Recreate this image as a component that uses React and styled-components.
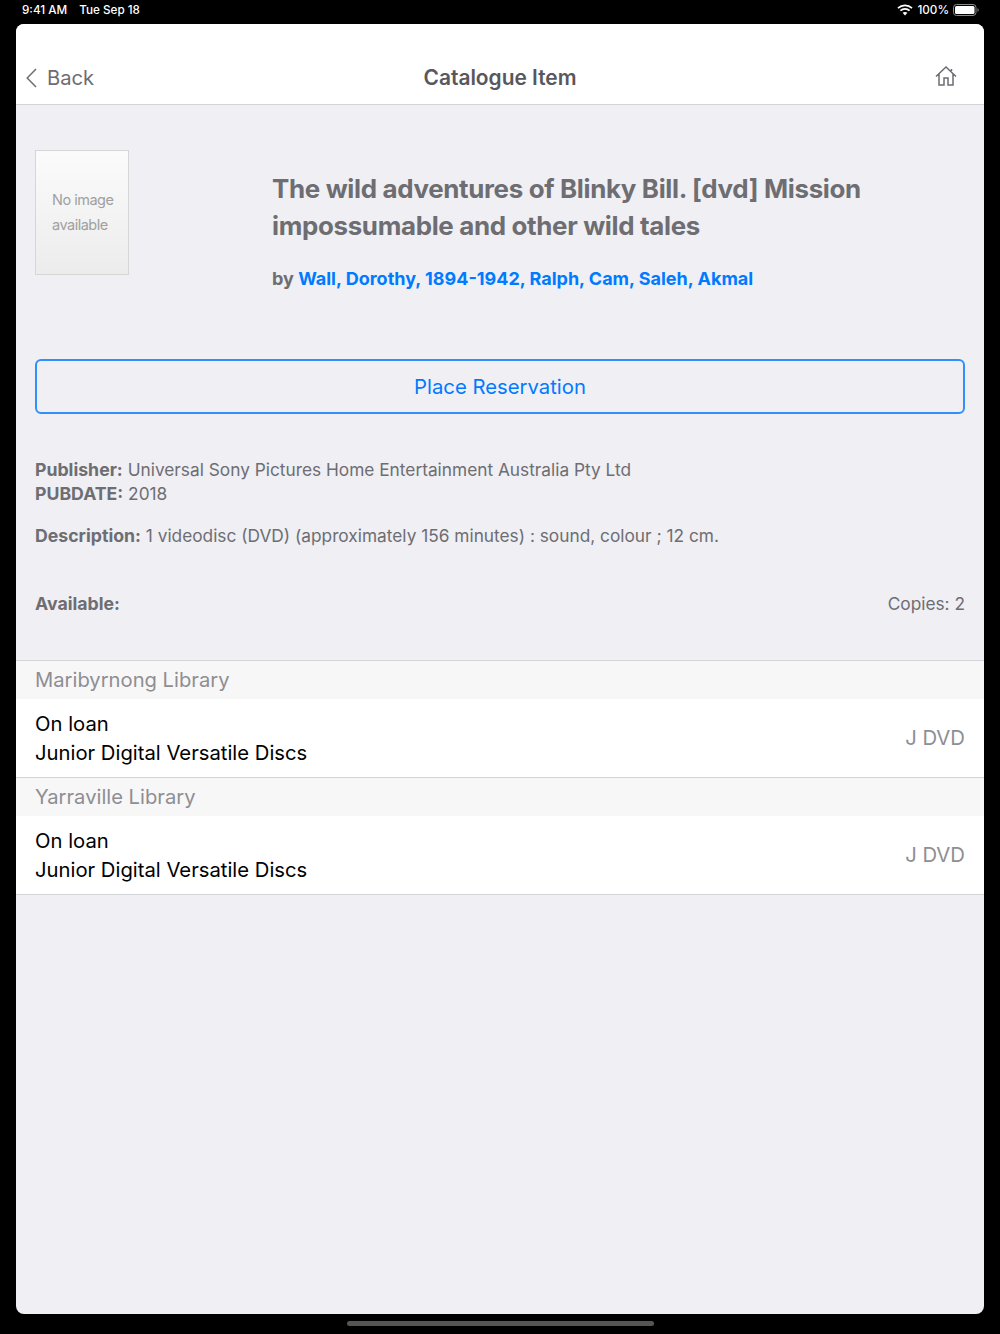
import React from 'react';
import styled, { createGlobalStyle } from 'styled-components';

const GlobalStyle = createGlobalStyle`
  html, body {
    margin: 0;
    padding: 0;
    background: #000;
    font-family: Inter, "Liberation Sans", sans-serif;
  }
`;

const Screen = styled.div`
  width: 1000px;
  height: 1334px;
  background: #000;
  display: flex;
  flex-direction: column;
  overflow: hidden;
`;

const StatusBar = styled.div`
  height: 24px;
  padding: 0 21px 5px 22px;
  box-sizing: border-box;
  display: flex;
  align-items: center;
  justify-content: space-between;
  color: #fff;
  font-size: 11.7px;
  font-weight: 500;
`;

const StatusGroup = styled.div`
  display: flex;
  align-items: center;
  gap: ${(p) => p.$gap}px;
`;

const Sheet = styled.div`
  width: 968px;
  height: 1290px;
  margin: 0 16px;
  background: #efeff4;
  border-radius: 8px;
  overflow: hidden;
  display: flex;
  flex-direction: column;
`;

const NavBar = styled.div`
  height: 81px;
  box-sizing: border-box;
  background: #fff;
  border-bottom: 1px solid #d3d3d8;
  padding: 0 27px 18px 10px;
  display: flex;
  align-items: flex-end;
  justify-content: space-between;
  position: relative;
`;

const BackLink = styled.div`
  display: flex;
  align-items: center;
  gap: 10px;
  color: #6d6d72;
  font-size: 20.2px;
  line-height: 28px;
  margin-bottom: -6px;
`;

const NavTitle = styled.div`
  position: absolute;
  left: 0;
  right: 0;
  bottom: 12px;
  text-align: center;
  color: #58585c;
  font-size: 20.9px;
  font-weight: 600;
  line-height: 28px;
`;

const Content = styled.div`
  padding: 45px 19px 0;
`;

const ItemHead = styled.div`
  display: flex;
  height: 209px;
`;

const Poster = styled.div`
  width: 94px;
  height: 125px;
  box-sizing: border-box;
  border: 1px solid #d6d6d6;
  background: linear-gradient(#fbfbfb, #ececec);
  padding: 36px 0 0 16px;
  color: #a0a0a0;
  font-size: 14.5px;
  letter-spacing: -0.5px;
  line-height: 25px;
  flex-shrink: 0;
`;

const ItemInfo = styled.div`
  margin-left: 143px;
  padding-top: 21px;
`;

const ItemTitle = styled.h1`
  margin: 0 0 23px;
  width: 640px;
  color: #6d6d72;
  font-size: 25.9px;
  font-weight: 700;
  letter-spacing: -0.33px;
  line-height: 36.5px;
`;

const Authors = styled.div`
  color: #6d6d72;
  font-size: 18px;
  font-weight: 700;
  line-height: 24px;
`;

const AuthorLinks = styled.span`
  color: #007aff;
`;

const ReserveButton = styled.button`
  display: block;
  width: 100%;
  height: 55px;
  padding: 0;
  background: transparent;
  border: 2px solid #2f8ffb;
  border-radius: 6px;
  color: #007aff;
  font-family: inherit;
  font-size: 20.3px;
`;

const Details = styled.div`
  margin-top: 44px;
  color: #6d6d72;
  font-size: 17.3px;
  line-height: 24px;
`;

const DetailBlock = styled.div`
  margin-bottom: 18px;
`;

const Label = styled.span`
  font-size: 17.7px;
  font-weight: 700;
`;

const AvailabilityRow = styled.div`
  display: flex;
  justify-content: space-between;
  margin-top: 44px;
  margin-bottom: 44px;
`;

const Holdings = styled.div`
  border-top: 1px solid #d3d3d8;
`;

const BranchHeader = styled.div`
  height: 38px;
  padding-left: 19px;
  background: #f7f7f7;
  color: #8e8e93;
  font-size: 20.2px;
  line-height: 38px;
`;

const HoldingRow = styled.div`
  height: 79px;
  box-sizing: border-box;
  padding: 0 19px 1px;
  background: #fff;
  border-bottom: 1px solid #d3d3d8;
  display: flex;
  justify-content: space-between;
  align-items: center;
`;

const HoldingText = styled.div`
  color: #000;
  font-size: 20.25px;
  line-height: 29px;
`;

const CallNumber = styled.div`
  color: #8e8e93;
  font-size: 20.3px;
`;

const HomeIndicatorBar = styled.div`
  flex: 1;
  display: flex;
  align-items: center;
  justify-content: center;
  padding-bottom: 1px;
`;

const HomeIndicator = styled.div`
  width: 307px;
  height: 5px;
  border-radius: 3px;
  background: #555;
`;

const BatteryIcon = () => (
  <svg width="26" height="12" viewBox="0 0 26 12">
    <rect x="0.5" y="0.5" width="22.5" height="11" rx="3" fill="none" stroke="#8a8a8a" />
    <rect x="2" y="2" width="19.5" height="8" rx="1.5" fill="#fff" />
    <path d="M24.5 4.2c.8.3 1.2 1 1.2 1.8s-.4 1.5-1.2 1.8z" fill="#8a8a8a" />
  </svg>
);

const WifiIcon = () => (
  <svg width="16" height="12" viewBox="0 0 16 12">
    <path d="M1 4.2C4.9.5 11.1.5 15 4.2" fill="none" stroke="#fff" strokeWidth="1.7" />
    <path d="M3.4 6.6c2.6-2.4 6.6-2.4 9.2 0" fill="none" stroke="#fff" strokeWidth="1.7" />
    <path d="M8 11.4 5.6 8.8c1.4-1.1 3.4-1.1 4.8 0z" fill="#fff" />
  </svg>
);

const BackChevron = () => (
  <svg width="11" height="20" viewBox="0 0 11 20">
    <path d="M10 1 1.2 10 10 19" fill="none" stroke="#6d6d72" strokeWidth="1.5" />
  </svg>
);

const HomeIcon = () => (
  <svg width="22" height="20" viewBox="0 0 22 20">
    <path
      d="M1 10.5 11 1l10 9.5M4 8v11h5v-7h4v7h5V8M16.5 3v2"
      fill="none"
      stroke="#6d6d72"
      strokeWidth="1.5"
    />
  </svg>
);

const branches = ['Maribyrnong Library', 'Yarraville Library'];

export default function App() {
  return (
    <Screen>
      <GlobalStyle />
      <StatusBar>
        <StatusGroup $gap={12}>
          <span>9:41 AM</span>
          <span>Tue Sep 18</span>
        </StatusGroup>
        <StatusGroup $gap={4}>
          <WifiIcon />
          <span>100%</span>
          <BatteryIcon />
        </StatusGroup>
      </StatusBar>
      <Sheet>
        <NavBar>
          <BackLink>
            <BackChevron />
            Back
          </BackLink>
          <NavTitle>Catalogue Item</NavTitle>
          <HomeIcon />
        </NavBar>
        <Content>
          <ItemHead>
            <Poster>
              No image
              <br />
              available
            </Poster>
            <ItemInfo>
              <ItemTitle>
                The wild adventures of Blinky Bill. [dvd] Mission impossumable and other wild tales
              </ItemTitle>
              <Authors>
                by <AuthorLinks>Wall, Dorothy, 1894-1942, Ralph, Cam, Saleh, Akmal</AuthorLinks>
              </Authors>
            </ItemInfo>
          </ItemHead>
          <ReserveButton>Place Reservation</ReserveButton>
          <Details>
            <DetailBlock>
              <Label>Publisher:</Label> Universal Sony Pictures Home Entertainment Australia Pty Ltd
              <br />
              <Label>PUBDATE:</Label> 2018
            </DetailBlock>
            <DetailBlock>
              <Label>Description:</Label> 1 videodisc (DVD) (approximately 156 minutes) : sound,
              colour ; 12 cm.
            </DetailBlock>
            <AvailabilityRow>
              <Label>Available:</Label>
              <span>Copies: 2</span>
            </AvailabilityRow>
          </Details>
        </Content>
        <Holdings>
          {branches.map((branch) => (
            <React.Fragment key={branch}>
              <BranchHeader>{branch}</BranchHeader>
              <HoldingRow>
                <HoldingText>
                  On loan
                  <br />
                  Junior Digital Versatile Discs
                </HoldingText>
                <CallNumber>J DVD</CallNumber>
              </HoldingRow>
            </React.Fragment>
          ))}
        </Holdings>
      </Sheet>
      <HomeIndicatorBar>
        <HomeIndicator />
      </HomeIndicatorBar>
    </Screen>
  );
}
